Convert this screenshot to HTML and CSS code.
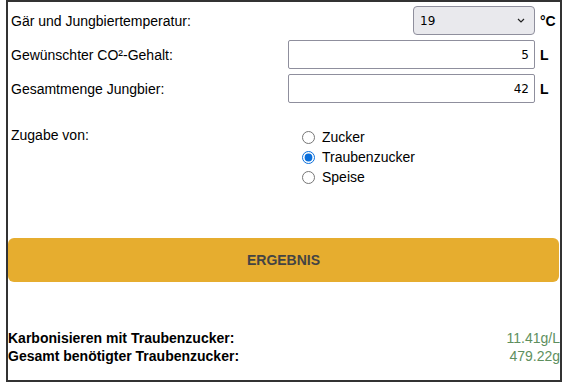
FILE: index.html
```html
<!DOCTYPE html>
<html lang="de">
<head>
<meta charset="utf-8">
<title>Karbonisierung</title>
<link rel="stylesheet" href="styles.css">
</head>
<body>
<div class="frame">
  <div class="row row-first">
    <span class="label">Gär und Jungbiertemperatur:</span>
    <select class="select"><option>19</option></select>
    <span class="unit">°C</span>
  </div>
  <div class="row">
    <span class="label">Gewünschter CO²-Gehalt:</span>
    <input class="input" type="text" value="5">
    <span class="unit">L</span>
  </div>
  <div class="row">
    <span class="label">Gesamtmenge Jungbier:</span>
    <input class="input" type="text" value="42">
    <span class="unit">L</span>
  </div>
  <div class="zugabe">
    <span class="zlabel">Zugabe von:</span>
    <div class="radios">
      <label class="radio"><input type="radio" name="z"><span>Zucker</span></label>
      <label class="radio"><input type="radio" name="z" checked><span>Traubenzucker</span></label>
      <label class="radio"><input type="radio" name="z"><span>Speise</span></label>
    </div>
  </div>
  <button class="btn" type="button">ERGEBNIS</button>
  <div class="results">
    <div class="res"><span class="rlabel">Karbonisieren mit Traubenzucker:</span><span class="rval">11.41g/L</span></div>
    <div class="res"><span class="rlabel">Gesamt benötigter Traubenzucker:</span><span class="rval">479.22g</span></div>
  </div>
</div>
</body>
</html>
```
FILE: styles.css
```css
html, body {
  margin: 0;
  padding: 0;
  background: #fff;
}
body {
  font-family: "Liberation Sans", Arial, sans-serif;
  font-size: 14px;
  color: #000;
}
.frame {
  margin-left: 6px;
  width: 552px;
  height: 378px;
  border: 2px solid #333;
  box-sizing: content-box;
  display: flex;
  flex-direction: column;
}
.row {
  display: flex;
  align-items: center;
  height: 29px;
  margin-top: 5px;
}
.row-first {
  margin-top: 4px;
}
.label {
  flex: 1;
  padding-left: 3px;
}
.select {
  -webkit-appearance: none;
  appearance: none;
  width: 122px;
  height: 29px;
  box-sizing: border-box;
  background-color: #e9e9ed;
  background-image: url("data:image/svg+xml,%3Csvg xmlns='http://www.w3.org/2000/svg' width='8' height='5' viewBox='0 0 8 5'%3E%3Cpath d='M1 1l3 3 3-3' fill='none' stroke='%23222' stroke-width='1.2'/%3E%3C/svg%3E");
  background-repeat: no-repeat;
  background-position: right 9px center;
  border: 1px solid #8f8f9d;
  border-radius: 4px;
  font-family: "DejaVu Sans", sans-serif;
  font-size: 12px;
  padding-left: 6px;
  color: #000;
}
.input {
  width: 247px;
  height: 29px;
  box-sizing: border-box;
  border: 1px solid #8f8f9d;
  border-radius: 2px;
  text-align: right;
  font-family: "DejaVu Sans", sans-serif;
  font-size: 12px;
  padding: 0 5px;
  color: #000;
}
.unit {
  width: 25px;
  padding-left: 5px;
  box-sizing: border-box;
  font-weight: bold;
}
.zugabe {
  display: flex;
  margin-top: 24px;
}
.zlabel {
  width: 289px;
  padding-left: 3px;
  box-sizing: border-box;
}
.radios {
  display: flex;
  flex-direction: column;
}
.radio {
  display: flex;
  align-items: center;
  height: 20px;
}
.radio input {
  margin: 0 7px 0 5px;
  width: 13px;
  height: 13px;
  accent-color: #0b6fdb;
}
.btn {
  margin-top: 51px;
  width: 551px;
  height: 44px;
  border: none;
  border-radius: 6px;
  background: #e6ad2f;
  color: #444;
  font-family: "Liberation Sans", Arial, sans-serif;
  font-size: 14px;
  font-weight: bold;
}
.results {
  margin-top: 47px;
  display: flex;
  flex-direction: column;
}
.res {
  display: flex;
  justify-content: space-between;
  height: 18px;
  line-height: 18px;
}
.rlabel {
  font-weight: bold;
}
.rval {
  color: #5e8f5e;
}
```
